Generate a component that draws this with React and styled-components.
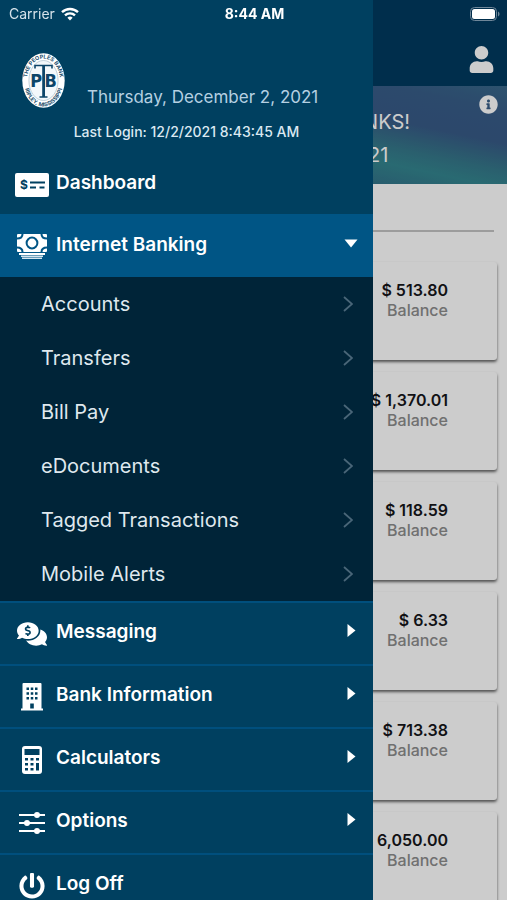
import React, { useState } from 'react'
import styled, { createGlobalStyle } from 'styled-components'
import { FaCommentsDollar, FaInfoCircle, FaPowerOff, FaUser } from 'react-icons/fa'

const accounts = ['$ 513.80', '$ 1,370.01', '$ 118.59', '$ 6.33', '$ 713.38', '$ 6,050.00']

const bankingLinks = ['Accounts', 'Transfers', 'Bill Pay', 'eDocuments', 'Tagged Transactions', 'Mobile Alerts']

const WifiIcon = () => (
	<svg width='18' height='14' viewBox='0 0 18 14' fill='none' stroke='#fff' strokeWidth='2.4' aria-hidden='true'>
		<path d='M1 5.2a11.6 11.6 0 0 1 16 0' />
		<path d='M4 8.4a7.2 7.2 0 0 1 10 0' />
		<path d='M6.4 10.8a3.8 3.8 0 0 1 5.2 0L9 13.6z' fill='#fff' stroke='none' />
	</svg>
)

const BatteryIcon = () => (
	<svg width='30' height='14' viewBox='0 0 30 14' aria-hidden='true'>
		<rect x='0.5' y='0.5' width='26' height='13' rx='4' fill='none' stroke='#6f8799' />
		<rect x='2' y='2' width='23' height='10' rx='2.5' fill='#fff' />
		<path d='M28 4.5c2 .8 2 4.2 0 5z' fill='#6f8799' />
	</svg>
)

const Logo = () => (
	<svg width='43' height='55' viewBox='0 0 43 55' role='img' aria-label='The Peoples Bank'>
		<defs>
			<path id='ringTop' d='M5 27.5a16.5 22 0 0 1 33 0' />
			<path id='ringBottom' d='M2 28a19.5 25.4 0 0 0 39 0' />
		</defs>
		<ellipse cx='21.5' cy='27.5' rx='21.2' ry='27.2' fill='#fff' />
		<ellipse cx='21.5' cy='27.5' rx='14.6' ry='20' fill='#f4f8fb' stroke='#8aa6b8' strokeWidth='0.5' />
		<g fill='#24506e' fontFamily='Inter, sans-serif' fontSize='5.5' fontWeight='700'>
			<text textAnchor='middle'><textPath href='#ringTop' startOffset='50%'>THE PEOPLES BANK</textPath></text>
			<text textAnchor='middle'><textPath href='#ringBottom' startOffset='50%'>RIPLEY, MISSISSIPPI</textPath></text>
		</g>
		<path d='M13 15.500v-3h17v3M17.500 44h8' fill='none' stroke='#0d4569' strokeWidth='1.600' />
		<path d='M20.200 12h2.800v32h-2.800z' fill='#0d4569' />
		<g fill='#0d4569' fontFamily='"DejaVu Sans Condensed", Roboto, sans-serif' fontSize='18' fontWeight='700'>
			<text x='20' y='34' textAnchor='end'>P</text>
			<text x='22.5' y='34'>B</text>
		</g>
	</svg>
)

const CheckIcon = () => (
	<svg width='34' height='24' viewBox='0 0 34 24' aria-hidden='true'>
		<rect width='34' height='24' rx='2' fill='#fff' />
		<text x='9' y='16' fill='#004060' fontFamily='Inter, sans-serif' fontSize='12' fontWeight='700' textAnchor='middle'>$</text>
		<path d='M15 9.500h15M15 14.500h6M24.500 14.500h5' stroke='#004060' strokeWidth='1.800' />
	</svg>
)

const CashIcon = () => (
	<svg width='30' height='25' viewBox='0 0 30 25' aria-hidden='true'>
		<rect width='30' height='18' rx='1' fill='#fff' />
		<g fill='none' stroke='#005585' strokeWidth='2'>
			<circle cx='15' cy='9' r='5.4' />
			<path d='M5.500 0c0 3-2.500 4.500-5.500 4.500M24.500 0c0 3 2.500 4.500 5.500 4.500M5.500 18c0-3-2.500-4.500-5.500-4.500M24.500 18c0-3 2.500-4.500 5.500-4.500' />
		</g>
		<path d='M2 19h26v2H2z' fill='#fff' />
		<path d='M4 21.500h22v1.500H4zM5 23.500h20v1.500H5z' fill='#d5e6f0' />
	</svg>
)

const BuildingIcon = () => (
	<svg width='22' height='28' viewBox='0 0 22 28' aria-hidden='true'>
		<path d='M1.500 1q0-1 1-1h17q1 0 1 1v24.500H22v2H0v-2h1.500z' fill='#fff' />
		<path
			d='M5.500 4.500H8V7H5.500zM9.750 4.500h2.500V7h-2.500zM14 4.500h2.500V7H14zM5.500 9.300H8v2.500H5.500zM9.750 9.300h2.500v2.500h-2.500zM14 9.300h2.500v2.500H14zM5.500 14H8v2.500H5.500zM9.750 14h2.500v2.500h-2.500zM14 14h2.500v2.500H14zM9.200 20.500h3.600v5H9.200z'
			fill='#004060'
		/>
	</svg>
)

const CalculatorIcon = () => (
	<svg width='20' height='28' viewBox='0 0 20 28' aria-hidden='true'>
		<rect width='20' height='28' rx='3' fill='#fff' />
		<path
			d='M2.500 3h15v6h-15zM3 12h3v2.500H3zM8.500 12h3v2.500h-3zM14 12h3v2.500h-3zM3 17h3v2.500H3zM8.500 17h3v2.500h-3zM14 17h3v7.500h-3zM3 22h3v2.500H3zM8.500 22h3v2.500h-3z'
			fill='#004060'
		/>
	</svg>
)

const SlidersIcon = () => (
	<svg width='26' height='22' viewBox='0 0 26 22' fill='#fff' aria-hidden='true'>
		<path d='M0 3h26M0 11h26M0 19h26' stroke='#fff' strokeWidth='1.800' />
		<circle cx='18' cy='3' r='3' />
		<circle cx='8' cy='11' r='3' />
		<circle cx='18' cy='19' r='3' />
	</svg>
)

const Chevron = () => (
	<svg width='10' height='16' viewBox='0 0 10 16' fill='none' stroke='#496678' strokeWidth='1.800' aria-hidden='true'>
		<path d='M1 1l8 7-8 7' />
	</svg>
)

const Caret = ({ open }) => (
	<CaretBox>
		{open ? (
			<svg width='14' height='9' viewBox='0 0 14 9' aria-hidden='true'><path d='M.5.5h13L7 8.500z' fill='#fff' /></svg>
		) : (
			<svg width='9' height='13' viewBox='0 0 9 13' aria-hidden='true'><path d='M.5 0l8 6.500-8 6.500z' fill='#fff' /></svg>
		)}
	</CaretBox>
)

const MenuItem = ({ icon, label, ...rest }) => (
	<MenuButton type='button' {...rest}>
		<IconBox>{icon}</IconBox>
		<Label>{label}</Label>
		{rest['aria-expanded'] !== undefined && <Caret open={rest['aria-expanded']} />}
	</MenuButton>
)

const App = () => {
	const [open, setOpen] = useState(true)

	return (
		<Screen>
			<GlobalStyle />
			<StatusBar>
				<Carrier>Carrier <WifiIcon /></Carrier>
				<Time>8:44 AM</Time>
				<Battery><BatteryIcon /></Battery>
			</StatusBar>

			<Page>
				<TopBar>
					<IconButton type='button' aria-label='Profile'><FaUser size={27} /></IconButton>
				</TopBar>
				<Banner>
					<BannerText>
						<span>THANKS!</span>
						<span>2021</span>
					</BannerText>
					<IconButton type='button' aria-label='Information'><FaInfoCircle size={19} /></IconButton>
				</Banner>
				<Divider />
				<Cards>
					{accounts.map((amount) => (
						<Card key={amount}>
							<Amount>{amount}</Amount>
							<Balance>Balance</Balance>
						</Card>
					))}
				</Cards>
			</Page>

			<Scrim />

			<Drawer>
				<Profile>
					<LogoRow>
						<Logo />
						<Today>Thursday, December 2, 2021</Today>
					</LogoRow>
					<LastLogin>Last Login: 12/2/2021 8:43:45 AM</LastLogin>
				</Profile>
				<MenuItem icon={<CheckIcon />} label='Dashboard' $plain />
				<MenuItem
					icon={<CashIcon />}
					label='Internet Banking'
					$active
					aria-expanded={open}
					onClick={() => setOpen(!open)}
				/>
				{open && (
					<SubMenu>
						{bankingLinks.map((link) => (
							<li key={link}>
								<SubLink href='#'>{link}<Chevron /></SubLink>
							</li>
						))}
					</SubMenu>
				)}
				<MenuItem icon={<FaCommentsDollar size={30} />} label='Messaging' aria-expanded={false} />
				<MenuItem icon={<BuildingIcon />} label='Bank Information' aria-expanded={false} />
				<MenuItem icon={<CalculatorIcon />} label='Calculators' aria-expanded={false} />
				<MenuItem icon={<SlidersIcon />} label='Options' aria-expanded={false} />
				<MenuItem icon={<FaPowerOff size={26} />} label='Log Off' />
			</Drawer>
		</Screen>
	)
}

const GlobalStyle = createGlobalStyle`
	* {
		box-sizing: border-box;
	}
	body {
		margin: 0;
		font-family: Inter, "Liberation Sans", sans-serif;
	}
	button {
		font-family: inherit;
		border: 0;
		padding: 0;
		background: none;
		cursor: pointer;
	}
	svg {
		display: block;
		flex-shrink: 0;
	}
`

const Screen = styled.div`
	position: relative;
	height: 100vh;
	overflow: hidden;
	background: #fff;
`

const StatusBar = styled.div`
	position: absolute;
	top: 0;
	left: 0;
	right: 0;
	z-index: 3;
	display: grid;
	grid-template-columns: 1fr auto 1fr;
	align-items: center;
	height: 27px;
	padding: 0 7px 0 9px;
	color: #fff;
	font-size: 14px;
`

const Carrier = styled.div`
	display: flex;
	align-items: center;
	gap: 6px;
	color: #d5e2ea;
`

const Time = styled.div`
	font-weight: 700;
`

const Battery = styled.div`
	justify-self: end;
`

const Page = styled.main`
	display: flex;
	flex-direction: column;
`

const TopBar = styled.header`
	display: flex;
	justify-content: flex-end;
	align-items: flex-end;
	height: 86px;
	padding: 13px 12px;
	background: #003a60;
`

const IconButton = styled.button`
	color: #fff;
`

const Banner = styled.section`
	display: flex;
	justify-content: flex-end;
	align-items: flex-start;
	gap: 69px;
	height: 98px;
	padding: 9px 9px 0 0;
	color: #fff;
	background: linear-gradient(192deg, #39688a 0%, #375d88 12%, #375a86 28%, #35788a 42%, #34858f 50%, #336f88 64%);
`

const BannerText = styled.div`
	display: flex;
	flex-direction: column;
	align-items: center;
	padding-top: 11px;
	font-size: 20px;
	line-height: 33px;
`

const Divider = styled.hr`
	width: calc(100% - 26px);
	height: 2px;
	margin: 46px 13px 30px;
	border: 0;
	background: #c4c4c4;
`

const Cards = styled.div`
	display: flex;
	flex-direction: column;
	gap: 12px;
	padding: 0 10px;
`

const Card = styled.article`
	display: flex;
	flex-direction: column;
	align-items: flex-end;
	height: 98px;
	padding: 18px 49px 0 0;
	border-radius: 3px;
	font-size: 16px;
	font-weight: 500;
	line-height: 20px;
	box-shadow: 0 2px 3px rgba(0, 0, 0, 0.6);
	background: #fff;
`

const Amount = styled.span`
	color: #16161a;
	font-weight: 600;
`

const Balance = styled.span`
	color: #8c8c8c;
`

const Scrim = styled.div`
	position: absolute;
	inset: 0;
	z-index: 1;
	background: rgba(0, 0, 0, 0.2);
`

const Drawer = styled.nav`
	position: absolute;
	top: 0;
	left: 0;
	z-index: 2;
	width: calc(100% - 134px);
	height: 100%;
	overflow-y: auto;
	scrollbar-width: none;
	background: #004060;
`

const Profile = styled.div`
	padding: 53px 22px 12px;
`

const LogoRow = styled.div`
	display: flex;
	align-items: flex-end;
	gap: 22px;
`

const Today = styled.div`
	color: #b5d0e2;
	font-size: 17px;
	line-height: 22px;
	white-space: nowrap;
`

const LastLogin = styled.div`
	margin-top: 14px;
	color: #dbe9f2;
	font-size: 14px;
	font-weight: 500;
	line-height: 20px;
	text-align: center;
`

const MenuButton = styled.button`
	display: flex;
	align-items: center;
	gap: 7px;
	width: 100%;
	height: ${(props) => (props.$plain ? '60px' : '63px')};
	padding: 0 15px;
	color: #fff;
	border-top: 2px solid ${(props) => (props.$plain ? 'transparent' : props.$active ? '#005585' : '#004f7d')};
	background: ${(props) => (props.$active ? '#005585' : 'transparent')};
`

const IconBox = styled.span`
	display: flex;
	justify-content: center;
	width: 34px;
`

const Label = styled.span`
	flex: 1;
	padding-bottom: 4px;
	font-size: 19px;
	font-weight: 600;
	line-height: 24px;
	text-align: left;
`

const CaretBox = styled.span`
	display: flex;
	justify-content: center;
	width: 14px;
	padding-bottom: 6px;
`

const SubMenu = styled.ul`
	margin: 0;
	padding: 0;
	list-style: none;
	background: #002438;
`

const SubLink = styled.a`
	display: flex;
	justify-content: space-between;
	align-items: center;
	height: 54px;
	padding: 0 20px 0 41px;
	color: #dfe8ee;
	font-size: 20px;
	text-decoration: none;
`

export default App
